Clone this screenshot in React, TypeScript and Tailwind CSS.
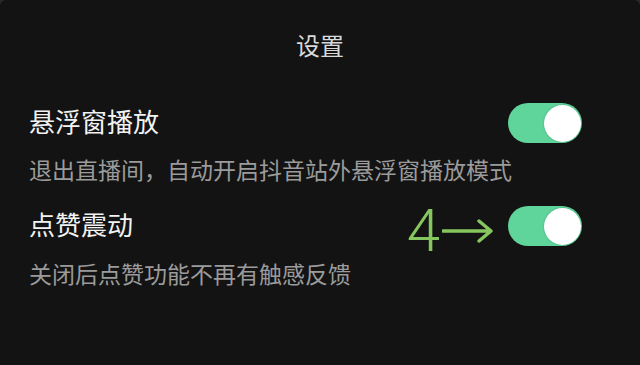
import React, { useState } from "react";

interface Setting {
    id: string;
    title: string;
    desc: string;
}

const settings: Setting[] = [
    { id: "float", title: "悬浮窗播放", desc: "退出直播间，自动开启抖音站外悬浮窗播放模式" },
    { id: "vibrate", title: "点赞震动", desc: "关闭后点赞功能不再有触感反馈" },
];

function Toggle({ on, onClick }: { on: boolean; onClick: () => void }) {
    return (
        <button
            onClick={onClick}
            className={`relative w-[74px] h-[40px] rounded-full flex items-center px-[1px] ${
                on ? "bg-[#5fd49b] justify-end" : "bg-[#3a3a3a] justify-start"
            }`}
        >
            <span className="block w-[37px] h-[37px] rounded-full bg-white shadow-[0_0_2px_rgba(0,0,0,0.25)]" />
        </button>
    );
}

export default function App() {
    const [values, setValues] = useState<Record<string, boolean>>({ float: true, vibrate: true });

    const flip = (id: string) => setValues((prev) => ({ ...prev, [id]: !prev[id] }));

    return (
        <div
            className="w-[640px] h-[365px] bg-[#2a2a2a]"
            style={{ fontFamily: '"Noto Sans CJK SC", "Noto Sans", sans-serif' }}
        >
            <div className="w-full h-full bg-[#131313] rounded-t-[6px] pt-[29px] px-[29px] pr-[58px] flex flex-col">
                {/* Title */}
                <div className="text-center text-[24px] leading-[32px] text-[#dadada] pl-[29px]">设置</div>

                {/* Row 1 */}
                <div className="mt-[38px] flex items-center justify-between h-[44px]">
                    <span className="text-[26px] leading-[36px] text-[#f2f2f2]">{settings[0].title}</span>
                    <div className="mt-[4px]">
                        <Toggle on={values.float} onClick={() => flip("float")} />
                    </div>
                </div>
                <p className="mt-[11px] text-[23px] leading-[30px] text-[#9b9b9b] whitespace-nowrap">
                    {settings[0].desc}
                </p>

                {/* Row 2 */}
                <div className="mt-[18px] flex items-center justify-between h-[44px]">
                    <span className="text-[26px] leading-[36px] text-[#f2f2f2]">{settings[1].title}</span>
                    <div className="flex items-center mt-[4px]">
                        {/* annotation */}
                        <span
                            className="text-[60px] leading-[44px] font-light text-[#86c65e] mt-[9px]"
                            style={{ fontFamily: 'Roboto, "Liberation Sans", sans-serif' }}
                        >
                            4
                        </span>
                        <svg width="52" height="24" viewBox="0 0 52 24" className="ml-[2px] mr-[14px] mt-[10px]">
                            <path
                                d="M1 12 H48 M37 2 L49 12 L37 22"
                                fill="none"
                                stroke="#86c65e"
                                strokeWidth="3.5"
                                strokeLinecap="round"
                                strokeLinejoin="round"
                            />
                        </svg>
                        <Toggle on={values.vibrate} onClick={() => flip("vibrate")} />
                    </div>
                </div>
                <p className="mt-[12px] text-[23px] leading-[30px] text-[#9b9b9b] whitespace-nowrap">
                    {settings[1].desc}
                </p>
            </div>
        </div>
    );
}
